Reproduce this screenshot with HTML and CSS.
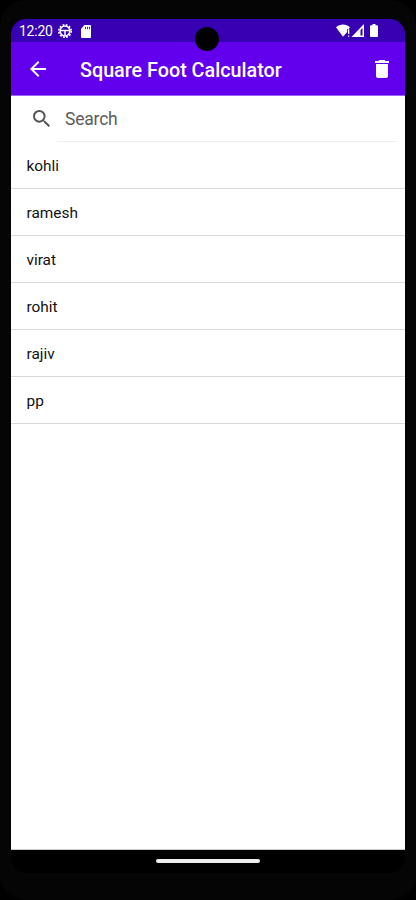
FILE: index.html
```html
<!DOCTYPE html>
<html lang="en">
<head>
<meta charset="utf-8">
<title>Square Foot Calculator</title>
<link rel="stylesheet" href="styles.css">
</head>
<body>
<div class="device">
  <div class="screen">
    <div class="status">
      <span class="time">12:20</span>
      <svg class="gear" viewBox="0 0 14 14" fill="none" stroke="#fff"><circle cx="7" cy="7" r="4.900" stroke-width="1.500"/><circle cx="7" cy="7" r="6.200" stroke-width="1.600" stroke-dasharray="1.800 1.446"/><path d="M2.500 6.500h9M7 6.500v5" stroke-width="1.500"/></svg>
      <svg class="sd" viewBox="0 0 10 13"><path fill="#fff" d="M3.500 0H9a1 1 0 0 1 1 1v11a1 1 0 0 1-1 1H1a1 1 0 0 1-1-1V3.800z"/><path stroke="#3700b3" stroke-width=".9" d="M4.500 1.800v2.400M6.500 1.800v2.400M8.500 1.800v2.400"/></svg>
      <svg class="signals" viewBox="0 0 44 14"><path fill="#fff" d="M0 3.200C4-.3 10-.3 14 3.200L12.600 5h-1.400v3L7 12.800z"/><path fill="#fff" d="M12 5.200h1.300v4.800H12zM12 11.500h1.300v1.300H12z"/><path fill="#fff" d="M28 0v13H15.500z"/><path fill="#3700b3" d="M24.500 6L26.500 4v7.500h-2z"/><path fill="#fff" d="M36.500 0h3v1.200H41a1 1 0 0 1 1 1V12a1 1 0 0 1-1 1h-6a1 1 0 0 1-1-1V2.200a1 1 0 0 1 1-1h1.500z"/></svg>
    </div>
    <header class="appbar">
      <svg class="back" viewBox="4 4 16 16"><path fill="#fff" d="M20 11H7.830l5.590-5.590L12 4l-8 8 8 8 1.410-1.410L7.830 13H20z"/></svg>
      <h1>Square Foot Calculator</h1>
      <svg class="trash" viewBox="5 3 14 18"><path fill="#fff" d="M6 19c0 1.100.9 2 2 2h8c1.100 0 2-.9 2-2V7H6zM19 4h-3.500l-1-1h-5l-1 1H5v2h14z"/></svg>
    </header>
    <div class="search">
      <svg class="lens" viewBox="3 3 17.500 17.500"><path fill="#555" d="M15.500 14h-.79l-.28-.27A6.470 6.470 0 0 0 16 9.500 6.500 6.500 0 1 0 9.500 16c1.610 0 3.090-.59 4.230-1.570l.27.28v.79l5 4.990L20.490 19zM9.500 14C7.010 14 5 11.990 5 9.500S7.010 5 9.500 5 14 7.010 14 9.500 11.990 14 9.500 14z"/></svg>
      <div class="field">Search</div>
    </div>
    <ul class="list">
      <li>kohli</li><li>ramesh</li><li>virat</li><li>rohit</li><li>rajiv</li><li>pp</li>
    </ul>
    <div class="nav"><span class="pill"></span></div>
  </div>
  <div class="camera"></div>
</div>
</body>
</html>
```
FILE: styles.css
```css
* { box-sizing: border-box; }
body { margin: 0; background: #000; font-family: Roboto, sans-serif; }
.device {
  position: relative;
  width: 416px;
  height: 900px;
  padding: 19px 11px 27px;
  background: #050505;
  border-radius: 26px;
}
.screen {
  display: flex;
  flex-direction: column;
  height: 854px;
  background: #000;
  border-radius: 15px;
  overflow: hidden;
}
.status {
  display: flex;
  align-items: center;
  height: 23px;
  padding: 1px 25px 0 8px;
  background: #3700b3;
  color: #fff;
}
.time { width: 39px; font-size: 14px; line-height: 22px; letter-spacing: -.25px; }
.gear { width: 14px; height: 14px; }
.sd { width: 10px; height: 13px; margin-left: 9px; }
.signals { width: 44px; height: 14px; margin-left: auto; }
.appbar {
  display: flex;
  align-items: center;
  height: 54px;
  padding: 0 16px 0 19px;
  background: #6200ee;
  border-bottom: 1px solid #9a65f3;
  color: #fff;
}
.back { width: 16px; height: 16px; }
.appbar h1 {
  flex: 1;
  margin: 4px 0 0 34px;
  font-size: 19.75px;
  line-height: 24px;
  font-weight: 500;
  white-space: nowrap;
}
.trash { width: 14px; height: 18px; }
.search { display: flex; height: 46px; padding: 0 8px 0 22px; background: #fff; }
.lens { width: 17px; height: 17px; margin-top: 14px; }
.field {
  flex: 1;
  height: 46px;
  margin-left: 7px;
  padding-left: 8px;
  border-bottom: 1px solid #eee;
  font-size: 17.5px;
  font-weight: 375;
  letter-spacing: -.2px;
  line-height: 46px;
  color: #5c5c5c;
}
.list { flex: 1; margin: 0; padding: 0; list-style: none; background: #fff; }
.list li {
  height: 47px;
  padding: 1px 0 0 15.5px;
  border-bottom: 1px solid #dadada;
  font-size: 15.4px;
  font-weight: 375;
  line-height: 47px;
  color: #111;
}
.nav {
  display: flex;
  justify-content: center;
  height: 24px;
  padding-top: 9px;
  background: #000;
  border-top: 1px solid #ccc;
}
.pill { width: 104px; height: 4px; border-radius: 2px; background: #eee; }
.camera {
  position: absolute;
  left: 195px;
  top: 27px;
  width: 24px;
  height: 24px;
  border-radius: 50%;
  background: #000;
}
```
